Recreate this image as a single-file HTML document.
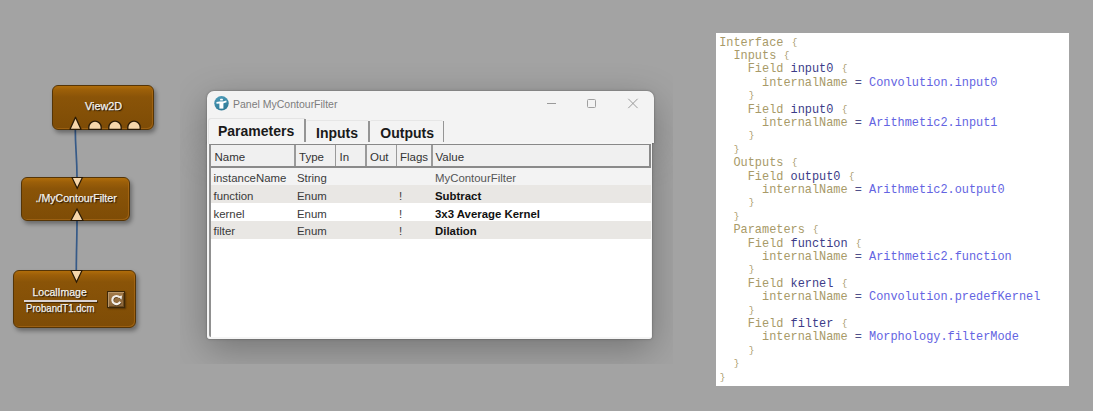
<!DOCTYPE html>
<html><head><meta charset="utf-8">
<style>
html,body{margin:0;padding:0;}
body{width:1093px;height:411px;background:#a3a3a3;position:relative;overflow:hidden;font-family:"Liberation Sans",sans-serif;}
.abs{position:absolute;}
/* nodes */
.node{position:absolute;border:1px solid #553507;border-radius:6px;
 background:linear-gradient(#b06d0a 0px,#9c5f09 4px,#8a5408 11px,#7e4c06 100%);
 box-shadow:2px 3px 4px rgba(0,0,0,0.35),inset -1px -1px 0 rgba(190,120,30,0.45);box-sizing:border-box;}
.ntxt{position:absolute;color:#f6f3ee;font-size:10.8px;white-space:nowrap;-webkit-text-stroke:0.25px #f6f3ee;text-shadow:1px 1.3px 1.2px rgba(0,0,0,0.95);}
.tri-up{position:absolute;width:0;height:0;}
/* window */
#shadowclip{position:absolute;left:180px;top:50px;width:493px;height:314.3px;overflow:hidden;}
#win{position:absolute;left:27px;top:41px;width:447px;height:247px;}
.wt{position:absolute;font-size:10.5px;color:#7c7c7c;white-space:nowrap;}
.tab{position:absolute;font-size:14px;font-weight:bold;color:#1a1a1a;white-space:nowrap;}
.hd{position:absolute;font-size:11.5px;color:#333;white-space:nowrap;}
.cell{position:absolute;font-size:11.4px;color:#3a3a3a;white-space:nowrap;}
.b{font-weight:bold;color:#111;}
/* code */
#code{position:absolute;left:716px;top:33px;width:353px;height:353px;background:#fff;}
#code pre{margin:0;position:absolute;left:3.2px;top:3.5px;font-family:"Liberation Mono",monospace;font-size:11.9px;line-height:13.4px;color:#a89a68;}
.k{color:#a89a68}.n{color:#3c3c88}.v{color:#6464e2}.e{color:#50508a}.br{display:inline-block;transform:translateY(-1px) scale(0.8,0.78);transform-origin:50% 55%;}
</style></head><body>

<!-- connection lines -->
<svg class="abs" style="left:0;top:0" width="200" height="411">
 <path d="M75.3 129 C75.3 150 77 155 77 178" stroke="#365a88" stroke-width="1.7" fill="none"/>
 <path d="M77 221 C77 240 76.3 250 76.3 271" stroke="#365a88" stroke-width="1.7" fill="none"/>
</svg>

<!-- View2D -->
<div class="node" style="left:52px;top:85px;width:102px;height:45px;"></div>
<div class="ntxt" style="left:85px;top:100px;">View2D</div>
<svg class="abs" style="left:52px;top:85px" width="102" height="45">
 <path d="M18 44.3 L23.5 32.3 L29 44.3 Z" fill="#f6d6aa" stroke="#2a1a05" stroke-width="1.3" stroke-linejoin="round"/>
 <path d="M36.8 44.3 L36.8 42.3 A6.2 6.2 0 0 1 49.2 42.3 L49.2 44.3 Z" fill="#f6d6aa" stroke="#2a1a05" stroke-width="1.3"/>
 <path d="M56.8 44.3 L56.8 42.3 A6.2 6.2 0 0 1 69.2 42.3 L69.2 44.3 Z" fill="#f6d6aa" stroke="#2a1a05" stroke-width="1.3"/>
 <path d="M75.8 44.3 L75.8 42.3 A6.2 6.2 0 0 1 88.2 42.3 L88.2 44.3 Z" fill="#f6d6aa" stroke="#2a1a05" stroke-width="1.3"/>
</svg>

<!-- MyContourFilter -->
<div class="node" style="left:21px;top:177px;width:109px;height:44px;"></div>
<div class="ntxt" style="left:35.5px;top:191.5px;font-size:10.6px;">./MyContourFilter</div>
<svg class="abs" style="left:21px;top:177px" width="109" height="44">
 <path d="M51 0.5 L56.2 11.3 L61.4 0.5 Z" fill="#f6d6aa" stroke="#2a1a05" stroke-width="1.2"/>
 <path d="M50 43.5 L56 32 L62 43.5 Z" fill="#f6d6aa" stroke="#2a1a05" stroke-width="1.2"/>
</svg>

<!-- LocalImage -->
<div class="node" style="left:13px;top:270px;width:123px;height:58px;"></div>
<div class="ntxt" style="left:32.5px;top:285.8px;font-size:10.5px;">LocalImage</div>
<div class="abs" style="left:24px;top:300px;width:72.5px;height:2px;background:#dcd3d3;box-shadow:1px 1px 1px rgba(0,0,0,0.5)"></div>
<div class="ntxt" style="left:26.3px;top:302.8px;font-size:10.4px;transform:scaleX(0.925);transform-origin:0 0;">ProbandT1.dcm</div>
<svg class="abs" style="left:13px;top:270px" width="123" height="58">
 <path d="M58 0.5 L63.5 12 L69 0.5 Z" fill="#f6d6aa" stroke="#2a1a05" stroke-width="1.2"/>
</svg>
<div class="abs" style="left:107.4px;top:291.3px;width:17.4px;height:16.9px;box-sizing:border-box;border:1px solid #3e2808;background:linear-gradient(#a27a48,#8c663a);box-shadow:inset 1px 1px 0 #b8966a,inset -1px -1px 0 #6a4a20,1px 1px 1.5px rgba(0,0,0,0.35)"></div>
<svg class="abs" style="left:108px;top:291.3px" width="17.4" height="17">
 <g transform="translate(0.6,0.8)" opacity="0.55"><path d="M11.6 6.4 A4.1 4.1 0 1 0 12.2 10.7" stroke="#2a1a05" stroke-width="2.1" fill="none"/><path d="M9.9 5.4 L14 4.5 L13.6 8.8 Z" fill="#2a1a05"/></g>
 <path d="M11.6 6.4 A4.1 4.1 0 1 0 12.2 10.7" stroke="#f4f0ea" stroke-width="2.1" fill="none"/>
 <path d="M9.9 5.4 L14 4.5 L13.6 8.8 Z" fill="#f4f0ea"/>
</svg>

<!-- Window with shadow -->
<div id="shadowclip">
 <div class="abs" style="left:27px;top:41px;width:447px;height:52px;border-radius:7px 7px 0 0;box-shadow:0 10px 36px rgba(0,0,0,0.29),0 0 3px rgba(0,0,0,0.22),0 0 1px rgba(0,0,0,0.4);"></div>
 <div class="abs" style="left:27px;top:92px;width:445px;height:196.8px;border-radius:0 0 2px 2px;box-shadow:0 10px 36px rgba(0,0,0,0.29),0 0 3px rgba(0,0,0,0.22),0 0 1px rgba(0,0,0,0.4);"></div>
 <div id="win">
  <div class="abs" style="left:0;top:0;width:447px;height:52px;background:#f3f3f3;border-radius:7px 7px 0 0;"></div>
  <div class="abs" style="left:0;top:51px;width:445px;height:196.8px;background:#f5f5f5;border-radius:0 0 3px 3px;"></div>
  <svg class="abs" style="left:6.8px;top:4.8px" width="15" height="15" viewBox="0 0 15 15">
   <defs><linearGradient id="ig" x1="0" y1="0" x2="0.3" y2="1"><stop offset="0" stop-color="#4f9dba"/><stop offset="1" stop-color="#2f7b98"/></linearGradient></defs>
   <circle cx="7.5" cy="7.3" r="7.2" fill="url(#ig)"/>
   <rect x="6.1" y="2.8" width="2.8" height="1.6" rx="0.5" fill="#fff"/>
   <path d="M2.4 6.0 L6 5.5 L9 5.4 L12.3 4.5 L12.6 6.3 L9.4 7.3 L5.6 7.5 L2.5 7.8 Z" fill="#fff"/>
   <rect x="5.4" y="5.8" width="4" height="6.8" fill="#fff"/>
  </svg>
  <div class="wt" style="left:26px;top:7px;">Panel MyContourFilter</div>
  <div class="abs" style="left:340.2px;top:11.8px;width:9px;height:1px;background:#9a9a9a"></div>
  <div class="abs" style="left:380.2px;top:7.8px;width:9.3px;height:9.2px;border:1px solid #a0a0a0;box-sizing:border-box;border-radius:1.5px"></div>
  <svg class="abs" style="left:420px;top:7px" width="12" height="12"><path d="M1.3 0.8 L10.6 10.1 M10.6 0.8 L1.3 10.1" stroke="#959595" stroke-width="0.95"/></svg>
  <!-- tabs -->
  <div class="abs" style="left:1px;top:27px;width:97px;height:25.5px;border:1px solid #e4e4e4;border-bottom:none;border-right:none;border-radius:3px 0 0 0;box-sizing:border-box;background:#f4f4f4"></div>
  <div class="abs" style="left:98.6px;top:29px;width:63px;height:22px;border-top:1px solid #e6e6e6;border-radius:2px 2px 0 0;box-sizing:border-box;"></div>
  <div class="abs" style="left:163px;top:29px;width:73px;height:22px;border-top:1px solid #e6e6e6;border-radius:2px 2px 0 0;box-sizing:border-box;"></div>
  <div class="abs" style="left:97px;top:28px;width:1.6px;height:22.5px;background:#959595;"></div>
  <div class="abs" style="left:161.3px;top:29.5px;width:1.6px;height:21px;background:#959595;"></div>
  <div class="abs" style="left:235.5px;top:29.5px;width:1.6px;height:21px;background:#959595;"></div>
  <div class="tab" style="left:11px;top:32px;">Parameters</div>
  <div class="tab" style="left:109px;top:33.5px;">Inputs</div>
  <div class="tab" style="left:173.3px;top:33.5px;">Outputs</div>
  <!-- table -->
  <div class="abs" style="left:2px;top:52.5px;width:441.5px;height:193.3px;background:#fff;border-left:2px solid #909090;border-top:1.5px solid #888;border-bottom-left-radius:2px;box-sizing:border-box;"></div>
  <div class="abs" style="left:4px;top:54px;width:438px;height:21.5px;background:#f0f0f0;"></div>
  <div class="abs" style="left:4px;top:75px;width:439.5px;height:1.6px;background:#8a8a8a;"></div>
  <div class="abs" style="left:442px;top:53.5px;width:1.6px;height:23px;background:#8a8a8a;"></div>
  <div class="abs" style="left:87.3px;top:54px;width:1.6px;height:21px;background:#9a9a9a;"></div>
  <div class="abs" style="left:127.5px;top:54px;width:1.6px;height:21px;background:#9a9a9a;"></div>
  <div class="abs" style="left:158.2px;top:54px;width:1.6px;height:21px;background:#9a9a9a;"></div>
  <div class="abs" style="left:188.5px;top:54px;width:1.6px;height:21px;background:#9a9a9a;"></div>
  <div class="abs" style="left:224px;top:54px;width:1.6px;height:21px;background:#9a9a9a;"></div>
  <div class="hd" style="left:7.5px;top:60.2px;">Name</div>
  <div class="hd" style="left:92px;top:60.2px;">Type</div>
  <div class="hd" style="left:132.5px;top:60.2px;">In</div>
  <div class="hd" style="left:163px;top:60.2px;">Out</div>
  <div class="hd" style="left:193px;top:60.2px;">Flags</div>
  <div class="hd" style="left:228.5px;top:60.2px;">Value</div>
  <!-- rows -->
  <div class="abs" style="left:4px;top:76.6px;width:439.5px;height:17.4px;background:#f3f3f3;"></div>
  <div class="abs" style="left:4px;top:94px;width:439.5px;height:18px;background:#e9e7e4;"></div>
  <div class="abs" style="left:4px;top:129.8px;width:439.5px;height:18px;background:#e9e7e4;"></div>
  <div class="cell" style="left:6.5px;top:80.8px;">instanceName</div>
  <div class="cell" style="left:90px;top:80.8px;">String</div>
  <div class="cell" style="left:228px;top:80.8px;color:#555">MyContourFilter</div>
  <div class="cell" style="left:6.5px;top:98.7px;">function</div>
  <div class="cell" style="left:90px;top:98.7px;">Enum</div>
  <div class="cell" style="left:192px;top:98.7px;">!</div>
  <div class="cell b" style="left:228px;top:98.7px;">Subtract</div>
  <div class="cell" style="left:6.5px;top:116.6px;">kernel</div>
  <div class="cell" style="left:90px;top:116.6px;">Enum</div>
  <div class="cell" style="left:192px;top:116.6px;">!</div>
  <div class="cell b" style="left:228px;top:116.6px;">3x3 Average Kernel</div>
  <div class="cell" style="left:6.5px;top:134.2px;">filter</div>
  <div class="cell" style="left:90px;top:134.2px;">Enum</div>
  <div class="cell" style="left:192px;top:134.2px;">!</div>
  <div class="cell b" style="left:228px;top:134.2px;">Dilation</div>
 </div>
</div>

<!-- code panel -->
<div id="code"><pre><span class="k">Interface <span class="br">{</span></span>
<span class="k">  Inputs <span class="br">{</span></span>
<span class="k">    Field </span><span class="n">input0</span> <span class="br">{</span>
<span class="k">      internalName </span><span class="e">=</span> <span class="v">Convolution.input0</span>
<span class="k">    <span class="br">}</span></span>
<span class="k">    Field </span><span class="n">input0</span> <span class="br">{</span>
<span class="k">      internalName </span><span class="e">=</span> <span class="v">Arithmetic2.input1</span>
<span class="k">    <span class="br">}</span></span>
<span class="k">  <span class="br">}</span></span>
<span class="k">  Outputs <span class="br">{</span></span>
<span class="k">    Field </span><span class="n">output0</span> <span class="br">{</span>
<span class="k">      internalName </span><span class="e">=</span> <span class="v">Arithmetic2.output0</span>
<span class="k">    <span class="br">}</span></span>
<span class="k">  <span class="br">}</span></span>
<span class="k">  Parameters <span class="br">{</span></span>
<span class="k">    Field </span><span class="n">function</span> <span class="br">{</span>
<span class="k">      internalName </span><span class="e">=</span> <span class="v">Arithmetic2.function</span>
<span class="k">    <span class="br">}</span></span>
<span class="k">    Field </span><span class="n">kernel</span> <span class="br">{</span>
<span class="k">      internalName </span><span class="e">=</span> <span class="v">Convolution.predefKernel</span>
<span class="k">    <span class="br">}</span></span>
<span class="k">    Field </span><span class="n">filter</span> <span class="br">{</span>
<span class="k">      internalName </span><span class="e">=</span> <span class="v">Morphology.filterMode</span>
<span class="k">    <span class="br">}</span></span>
<span class="k">  <span class="br">}</span></span>
<span class="k"><span class="br">}</span></span></pre></div>

</body></html>
